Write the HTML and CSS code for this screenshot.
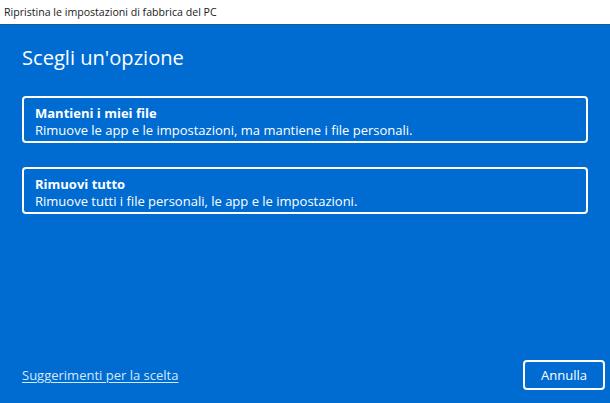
FILE: index.html
```html
<!DOCTYPE html>
<html lang="it">
<head>
<meta charset="utf-8">
<title>Ripristina le impostazioni di fabbrica del PC</title>
<link rel="stylesheet" href="styles.css">
</head>
<body>
<div class="window">
  <header class="titlebar">Ripristina le impostazioni di fabbrica del PC</header>
  <main class="content">
    <h1 class="heading">Scegli un'opzione</h1>
    <div class="options">
      <button class="option">
        <span class="option-title">Mantieni i miei file</span>
        <span class="option-desc">Rimuove le app e le impostazioni, ma mantiene i file personali.</span>
      </button>
      <button class="option">
        <span class="option-title">Rimuovi tutto</span>
        <span class="option-desc">Rimuove tutti i file personali, le app e le impostazioni.</span>
      </button>
    </div>
    <footer class="footer">
      <a class="link" href="#">Suggerimenti per la scelta</a>
      <button class="cancel">Annulla</button>
    </footer>
  </main>
</div>
</body>
</html>
```
FILE: styles.css
```css
* { box-sizing: border-box; }
html, body { margin: 0; padding: 0; }
body {
  width: 610px;
  height: 403px;
  overflow: hidden;
  font-family: "Open Sans", "Noto Sans", sans-serif;
  background: #ffffff;
}
.window {
  display: flex;
  flex-direction: column;
  height: 403px;
}
.titlebar {
  height: 25px;
  padding: 5px 0 0 4px;
  font-size: 10.6px;
  color: #1a1a1a;
  background: #ffffff;
  border-bottom: 1px solid #1d5a96;
}
.content {
  flex: 1;
  background: #006cd2;
  color: #ffffff;
  display: flex;
  flex-direction: column;
  padding: 19px 5px 13px 22px;
}
.heading {
  margin: 0;
  font-size: 20.1px;
  font-weight: 400;
  line-height: 27px;
}
.options {
  display: flex;
  flex-direction: column;
  gap: 24px;
  margin-top: 25px;
  width: 566px;
}
.option {
  display: flex;
  flex-direction: column;
  align-items: flex-start;
  height: 47px;
  padding: 7px 11px 5px;
  border: 2px solid #ffffff;
  border-radius: 4px;
  background: transparent;
  color: #ffffff;
  font-family: inherit;
  text-align: left;
  cursor: pointer;
}
.option-title {
  font-size: 13px;
  font-weight: 700;
  line-height: 16px;
}
.option-desc {
  font-size: 13px;
  line-height: 18px;
}
.footer {
  margin-top: auto;
  display: flex;
  justify-content: space-between;
  align-items: center;
}
.link {
  color: #d4e8fb;
  font-size: 13px;
  text-decoration: underline;
  text-underline-offset: 2px;
}
.cancel {
  width: 82px;
  height: 30px;
  border: 2px solid #ffffff;
  border-radius: 4px;
  background: transparent;
  color: #ffffff;
  font-family: inherit;
  font-size: 13px;
  cursor: pointer;
}
```
